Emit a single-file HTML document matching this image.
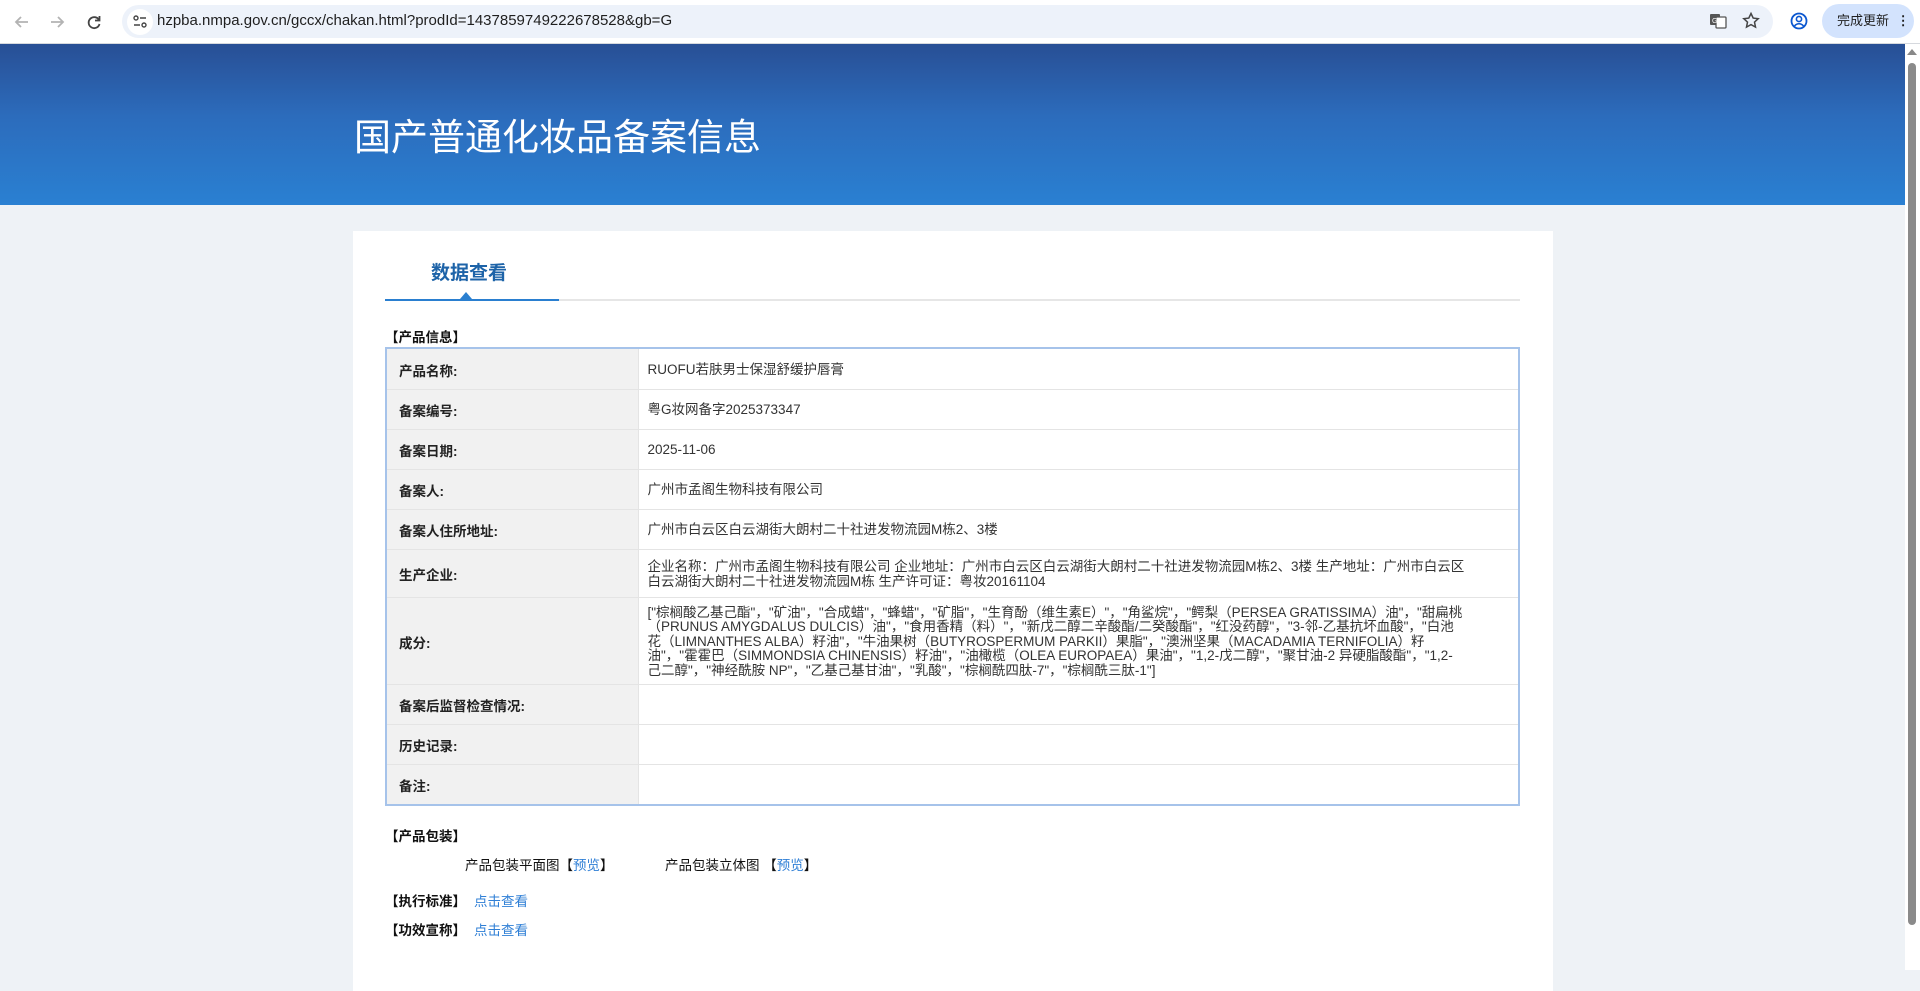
<!DOCTYPE html>
<html><head><meta charset="utf-8"><style>
*{margin:0;padding:0;box-sizing:border-box}
body{width:1920px;height:970px;overflow:hidden;background:#eef2f6;font-family:"Liberation Sans","Noto Sans CJK SC",sans-serif;position:relative}
.chrome{position:absolute;left:0;top:0;width:1920px;height:44px;background:#fff;border-bottom:1px solid #d6d9de}
.addr{position:absolute;left:122px;top:5px;width:1651px;height:33px;background:#edf2fa;border-radius:17px}
.url{position:absolute;left:157px;top:12px;font-size:15px;color:#1f1f1f}
.upd{position:absolute;left:1822px;top:4px;width:92px;height:34px;background:#d3e3fd;border-radius:17px;font-size:13px;color:#1f1f1f;line-height:34px;padding-left:15px}
.banner{position:absolute;left:0;top:44px;width:1905px;height:161px;background:linear-gradient(#284f95,#2c6cbc 45%,#2a80d2)}
.title{position:absolute;left:354px;top:107px;font-size:37px;color:#fff;font-family:"Noto Sans CJK SC",sans-serif;font-weight:400}
.card{position:absolute;left:353px;top:231px;width:1200px;height:760px;background:#fff}
.tab{position:absolute;left:431px;top:258px;font-size:19px;font-weight:bold;color:#1d63a8}
.line{position:absolute;left:385px;top:299px;width:1135px;height:2px;background:#e6e6e6}
.line b{position:absolute;left:0;top:0;width:174px;height:2px;background:#2a7fd0}
.tri{position:absolute;left:460px;top:292px;width:0;height:0;border-left:6px solid transparent;border-right:6px solid transparent;border-bottom:7px solid #2a7fd0}
.sec{position:absolute;font-size:13.5px;font-weight:bold;color:#111}
.tbl{position:absolute;left:385px;top:347px;width:1135px;border:2px solid #a6c3ea}
table{width:100%;border-collapse:collapse;font-size:13.5px}
td{border:1px solid #e4e4e4;color:#333;vertical-align:middle}
tr:first-child td{border-top:none}
tr:last-child td{border-bottom:none}
td:first-child{border-left:none}
td:last-child{border-right:none}
td.l{width:251px;background:#f1f1f1;font-weight:bold;color:#222;padding-left:12px;padding-top:2px}
td.v{padding-left:9px;padding-right:30px;line-height:14.6px;padding-top:3px}
a{color:#2f7fd6;text-decoration:none}
.t{position:absolute;font-size:13.5px;color:#111}
.sb{position:absolute;left:1905px;top:44px;width:15px;height:926px;background:#fff}
.thumb{position:absolute;left:1908px;top:63px;width:8px;height:862px;background:#8a8a8a;border-radius:4px}
</style></head><body>
<div class="chrome">
<svg style="position:absolute;left:12px;top:12px" width="20" height="20" viewBox="0 0 20 20"><path d="M16 10H4M9 5l-5 5 5 5" stroke="#b3b3b3" stroke-width="1.8" fill="none"/></svg>
<svg style="position:absolute;left:47px;top:12px" width="20" height="20" viewBox="0 0 20 20"><path d="M4 10h12M11 5l5 5-5 5" stroke="#b3b3b3" stroke-width="1.8" fill="none"/></svg>
<svg style="position:absolute;left:84px;top:12px" width="20" height="20" viewBox="0 0 20 20"><path d="M15 8a5.5 5.5 0 1 0 .5 4" stroke="#444" stroke-width="1.8" fill="none"/><path d="M15.5 4v4.5H11" stroke="#444" stroke-width="1.8" fill="none"/></svg>
<div class="addr"></div>
<div style="position:absolute;left:127px;top:9px;width:26px;height:26px;border-radius:13px;background:#fff"></div>
<svg style="position:absolute;left:132px;top:14px" width="16" height="16" viewBox="0 0 16 16"><circle cx="4" cy="4" r="2" stroke="#444" stroke-width="1.4" fill="none"/><path d="M8 4h6M2 11h6" stroke="#444" stroke-width="1.4"/><circle cx="12" cy="11" r="2" stroke="#444" stroke-width="1.4" fill="none"/></svg>
<div class="url">hzpba.nmpa.gov.cn/gccx/chakan.html?prodId=1437859749222678528&amp;gb=G</div>
<svg style="position:absolute;left:1708px;top:11px" width="20" height="20" viewBox="0 0 20 20"><rect x="2" y="3" width="10" height="11" rx="1" fill="#555"/><rect x="8" y="6" width="10" height="11" rx="1" fill="#fff" stroke="#555" stroke-width="1.3"/><text x="4" y="12" font-size="7" fill="#fff" font-family="Liberation Sans">G</text></svg>
<svg style="position:absolute;left:1741px;top:11px" width="20" height="20" viewBox="0 0 20 20"><path d="M10 2.5l2.2 4.6 5 .6-3.7 3.4 1 5-4.5-2.5-4.5 2.5 1-5L2.8 7.7l5-.6z" stroke="#444" stroke-width="1.5" fill="none"/></svg>
<svg style="position:absolute;left:1789px;top:11px" width="20" height="20" viewBox="0 0 20 20"><circle cx="10" cy="10" r="7.5" stroke="#0b57d0" stroke-width="1.8" fill="none"/><circle cx="10" cy="8" r="2.6" stroke="#0b57d0" stroke-width="1.6" fill="none"/><path d="M5.5 15c2.5-3 6.5-3 9 0" stroke="#0b57d0" stroke-width="1.6" fill="none"/></svg>
<div class="upd">完成更新 <span style="font-weight:bold;margin-left:4px">⋮</span></div>
</div>
<div class="banner"></div>
<div class="title">国产普通化妆品备案信息</div>
<div class="card"></div>
<div class="tab">数据查看</div>
<div class="line"><b></b></div>
<div class="tri"></div>
<div class="sec" style="left:385px;top:326px">【产品信息】</div>
<div class="tbl"><table>
<tr style="height:40px"><td class="l">产品名称:</td><td class="v">RUOFU若肤男士保湿舒缓护唇膏</td></tr>
<tr style="height:40px"><td class="l">备案编号:</td><td class="v">粤G妆网备字2025373347</td></tr>
<tr style="height:40px"><td class="l">备案日期:</td><td class="v">2025-11-06</td></tr>
<tr style="height:40px"><td class="l">备案人:</td><td class="v">广州市孟阁生物科技有限公司</td></tr>
<tr style="height:40px"><td class="l">备案人住所地址:</td><td class="v">广州市白云区白云湖街大朗村二十社进发物流园M栋2、3楼</td></tr>
<tr style="height:48px"><td class="l">生产企业:</td><td class="v" style="white-space:nowrap">企业名称：广州市孟阁生物科技有限公司 企业地址：广州市白云区白云湖街大朗村二十社进发物流园M栋2、3楼 生产地址：广州市白云区<br>白云湖街大朗村二十社进发物流园M栋 生产许可证：粤妆20161104</td></tr>
<tr style="height:87px"><td class="l">成分:</td><td class="v" style="white-space:nowrap;font-size:13.5px">["棕榈酸乙基己酯"，"矿油"，"合成蜡"，"蜂蜡"，"矿脂"，"生育酚（维生素E）"，"角鲨烷"，"鳄梨（PERSEA GRATISSIMA）油"，"甜扁桃<br>（PRUNUS AMYGDALUS DULCIS）油"，"食用香精（料）"，"新戊二醇二辛酸酯/二癸酸酯"，"红没药醇"，"3-邻-乙基抗坏血酸"，"白池<br>花（LIMNANTHES ALBA）籽油"，"牛油果树（BUTYROSPERMUM PARKII）果脂"，"澳洲坚果（MACADAMIA TERNIFOLIA）籽<br>油"，"霍霍巴（SIMMONDSIA CHINENSIS）籽油"，"油橄榄（OLEA EUROPAEA）果油"，"1,2-戊二醇"，"聚甘油-2 异硬脂酸酯"，"1,2-<br>己二醇"，"神经酰胺 NP"，"乙基己基甘油"，"乳酸"，"棕榈酰四肽-7"，"棕榈酰三肽-1"]</td></tr>
<tr style="height:40px"><td class="l">备案后监督检查情况:</td><td class="v"></td></tr>
<tr style="height:40px"><td class="l">历史记录:</td><td class="v"></td></tr>
<tr style="height:40px"><td class="l">备注:</td><td class="v"></td></tr>
</table></div>
<div class="sec" style="left:385px;top:825px">【产品包装】</div>
<div class="t" style="left:465px;top:854px">产品包装平面图【<a>预览</a>】</div>
<div class="t" style="left:665px;top:854px">产品包装立体图 【<a>预览</a>】</div>
<div class="sec" style="left:385px;top:890px">【执行标准】</div>
<div class="t" style="left:474px;top:890px"><a>点击查看</a></div>
<div class="sec" style="left:385px;top:919px">【功效宣称】</div>
<div class="t" style="left:474px;top:919px"><a>点击查看</a></div>
<div class="sb"></div>
<div style="position:absolute;left:1907px;top:49px;width:0;height:0;border-left:5px solid transparent;border-right:5px solid transparent;border-bottom:6px solid #888"></div>
<div class="thumb"></div>
</body></html>
